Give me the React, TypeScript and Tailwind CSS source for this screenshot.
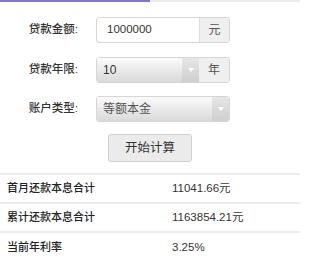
import React from "react";

const font = { fontFamily: '"Helvetica Neue", "Liberation Sans", "Noto Sans CJK SC", sans-serif' };

function Arrow() {
  return (
    <div className="flex h-full w-[17px] items-center justify-center bg-gradient-to-b from-[#e6e6e6] to-[#cfcfcf]">
      <svg width="6" height="5" viewBox="0 0 6 5">
        <path d="M0 0 L6 0 L3 4 Z" fill="#ffffff" />
      </svg>
    </div>
  );
}

function Label({ children }: { children: React.ReactNode }) {
  return (
    <div className="w-[78px] shrink-0 text-right text-[11.5px] font-medium text-[#333]">
      {children}:
    </div>
  );
}

const results = [
  { label: "首月还款本息合计", value: "11041.66元" },
  { label: "累计还款本息合计", value: "1163854.21元" },
  { label: "当前年利率", value: "3.25%" },
];

export default function App() {
  return (
    <div className="h-[273px] w-[300px] overflow-hidden bg-white" style={font}>
      {/* tab indicator */}
      <div className="flex h-[2px]">
        <div className="w-[150px] bg-[#7f76c4]" />
        <div className="flex-1 bg-[#ececec]" />
      </div>

      {/* form */}
      <div className="flex flex-col pt-[15px]">
        <div className="flex h-[26px] items-center gap-[18px]">
          <Label>贷款金额</Label>
          <div className="flex h-[26px] w-[134px] overflow-hidden rounded-[3px] border border-[#d6d6d6]">
            <div className="flex flex-1 items-center pl-[10px] text-[11.5px] text-[#333]">1000000</div>
            <div className="flex w-[30px] items-center justify-center border-l border-[#dcdcdc] bg-[#efefef] text-[12px] text-[#555]">元</div>
          </div>
        </div>

        <div className="mt-[14px] flex h-[26px] items-center gap-[18px]">
          <Label>贷款年限</Label>
          <div className="flex h-[26px] w-[134px] overflow-hidden rounded-[3px] border border-[#d6d6d6]">
            <div className="flex flex-1 items-center bg-gradient-to-b from-[#fbfbfb] to-[#d9d9d9] pl-[6px] text-[12px] text-[#333]">10</div>
            <Arrow />
            <div className="flex w-[30px] items-center justify-center bg-[#efefef] text-[12px] text-[#555]">年</div>
          </div>
        </div>

        <div className="mt-[13px] flex h-[26px] items-center gap-[18px]">
          <Label>账户类型</Label>
          <div className="flex h-[26px] w-[134px] overflow-hidden rounded-[3px] border border-[#d6d6d6]">
            <div className="flex flex-1 items-center bg-gradient-to-b from-[#fbfbfb] to-[#d9d9d9] pl-[6px] text-[12px] text-[#555]">等额本金</div>
            <Arrow />
          </div>
        </div>

        <div className="mt-[12px] flex justify-center">
          <button className="h-[28px] w-[84px] rounded-[3px] border border-[#cfcfcf] bg-[#ebebeb] text-[12.5px] text-[#333]">
            开始计算
          </button>
        </div>
      </div>

      {/* results */}
      <div className="mt-[11px] border-t-2 border-[#ececec]">
        {results.map((r, i) => (
          <div
            key={r.label}
            className={`flex h-[29px] items-center ${i < results.length - 1 ? "border-b-2 border-[#ececec]" : ""}`}
          >
            <div className="w-[172px] pl-[7px] text-[11px] font-medium text-[#222]">{r.label}</div>
            <div className="text-[11.5px] text-[#333]">{r.value}</div>
          </div>
        ))}
      </div>
    </div>
  );
}
